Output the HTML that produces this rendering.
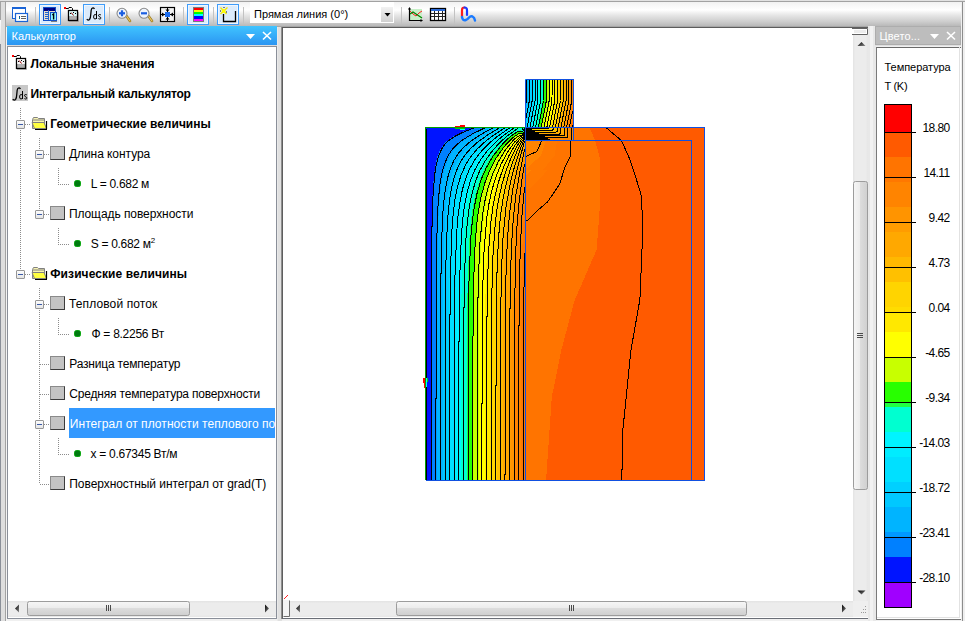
<!DOCTYPE html><html><head><meta charset="utf-8"><style>
html,body{margin:0;padding:0;}
body{width:965px;height:621px;overflow:hidden;position:relative;background:#f0f0f0;font-family:"Liberation Sans",sans-serif;}
.t{position:absolute;white-space:nowrap;line-height:14px;height:14px;}
.dv{position:absolute;}
</style></head><body>
<div style="position:absolute;left:0px;top:0px;width:965px;height:1px;background:#e2e2e2"></div>
<div style="position:absolute;left:0px;top:1px;width:965px;height:1px;background:#a2a2a2"></div>
<div style="position:absolute;left:0px;top:2px;width:1px;height:619px;background:#8a8f98"></div>
<div style="position:absolute;left:0px;top:2px;width:1px;height:18px;background:#a3a3a3"></div>
<div style="position:absolute;left:0px;top:20px;width:1px;height:24px;background:linear-gradient(#fcfcfc,#e0e0e0)"></div>
<div style="position:absolute;left:1px;top:2px;width:4px;height:619px;background:#dedede"></div>
<div style="position:absolute;left:5px;top:2px;width:1px;height:619px;background:#a3a3a3"></div>
<div style="position:absolute;left:6px;top:2px;width:1px;height:619px;background:#f4f4f4"></div>
<div style="position:absolute;left:6px;top:2px;width:959px;height:24px;background:linear-gradient(#f2f2f2 0%,#ffffff 33%,#e6e6e6 55%,#cfcfcf 80%,#b9b9b9 100%)"></div>
<div style="position:absolute;left:6px;top:26px;width:959px;height:1px;background:#a6a6a6"></div>
<div style="position:absolute;left:7px;top:26px;width:270px;height:19px;background:linear-gradient(#40c4ff,#2b95f2)"></div>
<div style="position:absolute;left:7px;top:45px;width:270px;height:1px;background:#dcdcdc"></div>
<div style="position:absolute;left:7px;top:46px;width:270px;height:573px;background:#fff;box-sizing:border-box;border:1px solid #8a8f99"></div>
<div style="position:absolute;left:277px;top:27px;width:5px;height:594px;background:#e0e0e0"></div>
<div style="position:absolute;left:277px;top:27px;width:1px;height:594px;background:#e9e9e9"></div>
<div style="position:absolute;left:281px;top:27px;width:1px;height:592px;background:#8e8e8e"></div>
<div style="position:absolute;left:282px;top:27px;width:587px;height:592px;background:#fff;box-sizing:border-box;border-left:1px solid #5e5e5e;border-top:1px solid #5c5c5c;border-bottom:1px solid #6a6e76"></div>
<div style="position:absolute;left:868px;top:26px;width:8px;height:595px;background:#e8e8e8"></div>
<div style="position:absolute;left:870px;top:26px;width:3px;height:595px;background:#f2f2f2"></div>
<div style="position:absolute;left:875px;top:26px;width:86px;height:19px;background:#bdbdbd;box-sizing:border-box;border:1px solid #adadad"></div>
<div style="position:absolute;left:875px;top:45px;width:87px;height:1px;background:#e0e0e0"></div>
<div style="position:absolute;left:876px;top:47px;width:87px;height:573px;background:#fff;box-sizing:border-box;border:1px solid #7a7a7a;border-top:1px solid #6a6a6a"></div>
<div style="position:absolute;left:877px;top:47px;width:83px;height:571px;box-sizing:border-box;border-right:1px solid #e2e2e2;border-bottom:1px solid #e2e2e2"></div>
<div style="position:absolute;left:961px;top:2px;width:4px;height:619px;background:#efefef"></div>
<div style="position:absolute;left:962px;top:2px;width:1px;height:619px;background:#8c8c8c"></div>
<div style="position:absolute;left:20px;top:108px;width:1px;height:165px;background:repeating-linear-gradient(to bottom,#8c8c8c 0,#8c8c8c 1px,transparent 1px,transparent 2px)"></div>
<div style="position:absolute;left:39px;top:138px;width:1px;height:75px;background:repeating-linear-gradient(to bottom,#8c8c8c 0,#8c8c8c 1px,transparent 1px,transparent 2px)"></div>
<div style="position:absolute;left:39px;top:288px;width:1px;height:195px;background:repeating-linear-gradient(to bottom,#8c8c8c 0,#8c8c8c 1px,transparent 1px,transparent 2px)"></div>
<div style="position:absolute;left:58px;top:168px;width:1px;height:16px;background:repeating-linear-gradient(to bottom,#8c8c8c 0,#8c8c8c 1px,transparent 1px,transparent 2px)"></div>
<div style="position:absolute;left:58px;top:184px;width:11px;height:1px;background:repeating-linear-gradient(to right,#8c8c8c 0,#8c8c8c 1px,transparent 1px,transparent 2px)"></div>
<div style="position:absolute;left:58px;top:228px;width:1px;height:16px;background:repeating-linear-gradient(to bottom,#8c8c8c 0,#8c8c8c 1px,transparent 1px,transparent 2px)"></div>
<div style="position:absolute;left:58px;top:244px;width:11px;height:1px;background:repeating-linear-gradient(to right,#8c8c8c 0,#8c8c8c 1px,transparent 1px,transparent 2px)"></div>
<div style="position:absolute;left:58px;top:318px;width:1px;height:16px;background:repeating-linear-gradient(to bottom,#8c8c8c 0,#8c8c8c 1px,transparent 1px,transparent 2px)"></div>
<div style="position:absolute;left:58px;top:334px;width:11px;height:1px;background:repeating-linear-gradient(to right,#8c8c8c 0,#8c8c8c 1px,transparent 1px,transparent 2px)"></div>
<div style="position:absolute;left:58px;top:438px;width:1px;height:16px;background:repeating-linear-gradient(to bottom,#8c8c8c 0,#8c8c8c 1px,transparent 1px,transparent 2px)"></div>
<div style="position:absolute;left:58px;top:454px;width:11px;height:1px;background:repeating-linear-gradient(to right,#8c8c8c 0,#8c8c8c 1px,transparent 1px,transparent 2px)"></div>
<div style="position:absolute;left:25px;top:124px;width:6px;height:1px;background:repeating-linear-gradient(to right,#8c8c8c 0,#8c8c8c 1px,transparent 1px,transparent 2px)"></div>
<div style="position:absolute;left:25px;top:274px;width:6px;height:1px;background:repeating-linear-gradient(to right,#8c8c8c 0,#8c8c8c 1px,transparent 1px,transparent 2px)"></div>
<div style="position:absolute;left:44px;top:154px;width:6px;height:1px;background:repeating-linear-gradient(to right,#8c8c8c 0,#8c8c8c 1px,transparent 1px,transparent 2px)"></div>
<div style="position:absolute;left:44px;top:214px;width:6px;height:1px;background:repeating-linear-gradient(to right,#8c8c8c 0,#8c8c8c 1px,transparent 1px,transparent 2px)"></div>
<div style="position:absolute;left:44px;top:304px;width:6px;height:1px;background:repeating-linear-gradient(to right,#8c8c8c 0,#8c8c8c 1px,transparent 1px,transparent 2px)"></div>
<div style="position:absolute;left:44px;top:424px;width:6px;height:1px;background:repeating-linear-gradient(to right,#8c8c8c 0,#8c8c8c 1px,transparent 1px,transparent 2px)"></div>
<div style="position:absolute;left:40px;top:364px;width:10px;height:1px;background:repeating-linear-gradient(to right,#8c8c8c 0,#8c8c8c 1px,transparent 1px,transparent 2px)"></div>
<div style="position:absolute;left:40px;top:394px;width:10px;height:1px;background:repeating-linear-gradient(to right,#8c8c8c 0,#8c8c8c 1px,transparent 1px,transparent 2px)"></div>
<div style="position:absolute;left:40px;top:484px;width:10px;height:1px;background:repeating-linear-gradient(to right,#8c8c8c 0,#8c8c8c 1px,transparent 1px,transparent 2px)"></div>
<div style="position:absolute;left:16px;top:120px;width:9px;height:9px;box-sizing:border-box;border:1px solid #969696;border-radius:1px;background:linear-gradient(#fdfdfd,#e4e4e4)"><div style="position:absolute;left:1px;top:3px;width:5px;height:1px;background:#3b5ba8"></div></div>
<div style="position:absolute;left:16px;top:270px;width:9px;height:9px;box-sizing:border-box;border:1px solid #969696;border-radius:1px;background:linear-gradient(#fdfdfd,#e4e4e4)"><div style="position:absolute;left:1px;top:3px;width:5px;height:1px;background:#3b5ba8"></div></div>
<div style="position:absolute;left:35px;top:150px;width:9px;height:9px;box-sizing:border-box;border:1px solid #969696;border-radius:1px;background:linear-gradient(#fdfdfd,#e4e4e4)"><div style="position:absolute;left:1px;top:3px;width:5px;height:1px;background:#3b5ba8"></div></div>
<div style="position:absolute;left:35px;top:210px;width:9px;height:9px;box-sizing:border-box;border:1px solid #969696;border-radius:1px;background:linear-gradient(#fdfdfd,#e4e4e4)"><div style="position:absolute;left:1px;top:3px;width:5px;height:1px;background:#3b5ba8"></div></div>
<div style="position:absolute;left:35px;top:300px;width:9px;height:9px;box-sizing:border-box;border:1px solid #969696;border-radius:1px;background:linear-gradient(#fdfdfd,#e4e4e4)"><div style="position:absolute;left:1px;top:3px;width:5px;height:1px;background:#3b5ba8"></div></div>
<div style="position:absolute;left:35px;top:420px;width:9px;height:9px;box-sizing:border-box;border:1px solid #969696;border-radius:1px;background:linear-gradient(#fdfdfd,#e4e4e4)"><div style="position:absolute;left:1px;top:3px;width:5px;height:1px;background:#3b5ba8"></div></div>
<div style="position:absolute;left:50px;top:146px;width:15px;height:14px;box-sizing:border-box;border:1px solid #8a8a8a;border-right-color:#3c3c3c;border-bottom-color:#3c3c3c;background:#c3c3c3"></div>
<div style="position:absolute;left:50px;top:206px;width:15px;height:14px;box-sizing:border-box;border:1px solid #8a8a8a;border-right-color:#3c3c3c;border-bottom-color:#3c3c3c;background:#c3c3c3"></div>
<div style="position:absolute;left:50px;top:296px;width:15px;height:14px;box-sizing:border-box;border:1px solid #8a8a8a;border-right-color:#3c3c3c;border-bottom-color:#3c3c3c;background:#c3c3c3"></div>
<div style="position:absolute;left:50px;top:356px;width:15px;height:14px;box-sizing:border-box;border:1px solid #8a8a8a;border-right-color:#3c3c3c;border-bottom-color:#3c3c3c;background:#c3c3c3"></div>
<div style="position:absolute;left:50px;top:386px;width:15px;height:14px;box-sizing:border-box;border:1px solid #8a8a8a;border-right-color:#3c3c3c;border-bottom-color:#3c3c3c;background:#c3c3c3"></div>
<div style="position:absolute;left:50px;top:416px;width:15px;height:14px;box-sizing:border-box;border:1px solid #8a8a8a;border-right-color:#3c3c3c;border-bottom-color:#3c3c3c;background:#c3c3c3"></div>
<div style="position:absolute;left:50px;top:476px;width:15px;height:14px;box-sizing:border-box;border:1px solid #8a8a8a;border-right-color:#3c3c3c;border-bottom-color:#3c3c3c;background:#c3c3c3"></div>
<div style="position:absolute;left:74.0px;top:180.0px;width:7px;height:7px;border-radius:50%;background:#007a10;box-shadow:0 0 0 0.5px #12c412 inset"></div>
<div style="position:absolute;left:74.0px;top:240.0px;width:7px;height:7px;border-radius:50%;background:#007a10;box-shadow:0 0 0 0.5px #12c412 inset"></div>
<div style="position:absolute;left:74.0px;top:330.0px;width:7px;height:7px;border-radius:50%;background:#007a10;box-shadow:0 0 0 0.5px #12c412 inset"></div>
<div style="position:absolute;left:74.0px;top:450.0px;width:7px;height:7px;border-radius:50%;background:#007a10;box-shadow:0 0 0 0.5px #12c412 inset"></div>
<div style="position:absolute;left:69px;top:408px;width:206px;height:30px;background:#3399ff"></div>
<div class="t" style="left:30.6px;top:57.44px;font-size:12px;font-weight:bold;color:#000;letter-spacing:-0.116px;">Локальные значения</div>
<div class="t" style="left:30.6px;top:87.44px;font-size:12px;font-weight:bold;color:#000;letter-spacing:-0.243px;">Интегральный калькулятор</div>
<div class="t" style="left:50.2px;top:117.44px;font-size:12px;font-weight:bold;color:#000;letter-spacing:0.013px;">Геометрические величины</div>
<div class="t" style="left:68.89999999999999px;top:147.44px;font-size:12px;font-weight:normal;color:#000;letter-spacing:-0.054px;">Длина контура</div>
<div class="t" style="left:90.69999999999999px;top:177.44px;font-size:12px;font-weight:normal;color:#000;letter-spacing:-0.285px;">L = 0.682 м</div>
<div class="t" style="left:68.89999999999999px;top:207.44px;font-size:12px;font-weight:normal;color:#000;letter-spacing:-0.069px;">Площадь поверхности</div>
<div class="t" style="left:90.69999999999999px;top:237.44px;font-size:12px;font-weight:normal;color:#000;letter-spacing:-0.3px;">S = 0.682 м<sup style='font-size:8px;vertical-align:0;position:relative;top:-5px'>2</sup></div>
<div class="t" style="left:50.300000000000004px;top:267.44px;font-size:12px;font-weight:bold;color:#000;letter-spacing:0.082px;">Физические величины</div>
<div class="t" style="left:69.0px;top:297.44px;font-size:12px;font-weight:normal;color:#000;letter-spacing:0.122px;">Тепловой поток</div>
<div class="t" style="left:91.39999999999999px;top:327.44px;font-size:12px;font-weight:normal;color:#000;letter-spacing:-0.264px;">Ф = 8.2256 Вт</div>
<div class="t" style="left:69.3px;top:357.44px;font-size:12px;font-weight:normal;color:#000;letter-spacing:-0.199px;">Разница температур</div>
<div class="t" style="left:69.3px;top:387.44px;font-size:12px;font-weight:normal;color:#000;letter-spacing:-0.186px;">Средняя температура поверхности</div>
<div class="t" style="left:69.8px;top:417.44px;font-size:12px;font-weight:normal;color:#fff;letter-spacing:0.06px;width:206px;overflow:hidden;">Интеграл от плотности теплового потока</div>
<div class="t" style="left:90.5px;top:447.44px;font-size:12px;font-weight:normal;color:#000;letter-spacing:-0.274px;">x = 0.67345 Вт/м</div>
<div class="t" style="left:69.3px;top:477.44px;font-size:12px;font-weight:normal;color:#000;letter-spacing:-0.062px;">Поверхностный интеграл от grad(T)</div>
<div class="t" style="left:11.5px;top:29.3px;font-size:11px;color:#fff;letter-spacing:0px">Калькулятор</div>
<div class="t" style="left:879.5px;top:29.3px;font-size:11px;color:#fff;letter-spacing:0.1px">Цвето...</div>
<div class="t" style="left:884.5px;top:59.7px;font-size:11px;letter-spacing:-0.04px">Температура</div>
<div class="t" style="left:884.5px;top:78.7px;font-size:11px;letter-spacing:-0.3px">T (K)</div>
<svg style="position:absolute;left:0;top:0" width="965" height="621"><g shape-rendering="crispEdges"><rect x="884" y="104" width="28" height="28" fill="#ff0000"/><rect x="884" y="132" width="28" height="25" fill="#ff5a00"/><rect x="884" y="157" width="28" height="20" fill="#ff7400"/><rect x="884" y="177" width="28" height="5" fill="#ff7800"/><rect x="884" y="182" width="28" height="25" fill="#ff8400"/><rect x="884" y="207" width="28" height="15" fill="#ff9400"/><rect x="884" y="222" width="28" height="10" fill="#ff9c00"/><rect x="884" y="232" width="28" height="25" fill="#ffa800"/><rect x="884" y="257" width="28" height="10" fill="#ffb800"/><rect x="884" y="267" width="28" height="15" fill="#ffc000"/><rect x="884" y="282" width="28" height="25" fill="#ffd400"/><rect x="884" y="307" width="28" height="5" fill="#ffdc00"/><rect x="884" y="312" width="28" height="20" fill="#ffe800"/><rect x="884" y="332" width="28" height="25" fill="#ffff00"/><rect x="884" y="357" width="28" height="25" fill="#c8ff00"/><rect x="884" y="382" width="28" height="20" fill="#28ff00"/><rect x="884" y="402" width="28" height="5" fill="#20ff40"/><rect x="884" y="407" width="28" height="25" fill="#00ffd0"/><rect x="884" y="432" width="28" height="15" fill="#00f4ff"/><rect x="884" y="447" width="28" height="10" fill="#00ecff"/><rect x="884" y="457" width="28" height="25" fill="#00e0ff"/><rect x="884" y="482" width="28" height="10" fill="#00d0ff"/><rect x="884" y="492" width="28" height="15" fill="#00c8ff"/><rect x="884" y="507" width="28" height="25" fill="#00b4ff"/><rect x="884" y="532" width="28" height="5" fill="#0098ff"/><rect x="884" y="537" width="28" height="20" fill="#0080ff"/><rect x="884" y="557" width="28" height="25" fill="#0014ff"/><rect x="884" y="582" width="28" height="26" fill="#a000ff"/><rect x="884.5" y="104.5" width="27" height="503" fill="none" stroke="#000" stroke-width="1"/><rect x="884" y="132" width="32" height="1" fill="#000"/><rect x="884" y="177" width="32" height="1" fill="#000"/><rect x="884" y="222" width="32" height="1" fill="#000"/><rect x="884" y="267" width="32" height="1" fill="#000"/><rect x="884" y="312" width="32" height="1" fill="#000"/><rect x="884" y="357" width="32" height="1" fill="#000"/><rect x="884" y="402" width="32" height="1" fill="#000"/><rect x="884" y="447" width="32" height="1" fill="#000"/><rect x="884" y="492" width="32" height="1" fill="#000"/><rect x="884" y="537" width="32" height="1" fill="#000"/><rect x="884" y="582" width="32" height="1" fill="#000"/></g></svg>
<div class="t" style="left:860px;width:89.5px;text-align:right;top:121.34px;font-size:12px;letter-spacing:-0.62px">18.80</div>
<div class="t" style="left:860px;width:89.5px;text-align:right;top:166.34px;font-size:12px;letter-spacing:-0.62px">14.11</div>
<div class="t" style="left:860px;width:89.5px;text-align:right;top:211.34px;font-size:12px;letter-spacing:-0.62px">9.42</div>
<div class="t" style="left:860px;width:89.5px;text-align:right;top:256.34px;font-size:12px;letter-spacing:-0.62px">4.73</div>
<div class="t" style="left:860px;width:89.5px;text-align:right;top:301.34px;font-size:12px;letter-spacing:-0.62px">0.04</div>
<div class="t" style="left:860px;width:89.5px;text-align:right;top:346.34px;font-size:12px;letter-spacing:-0.62px">-4.65</div>
<div class="t" style="left:860px;width:89.5px;text-align:right;top:391.34px;font-size:12px;letter-spacing:-0.62px">-9.34</div>
<div class="t" style="left:860px;width:89.5px;text-align:right;top:436.34px;font-size:12px;letter-spacing:-0.62px">-14.03</div>
<div class="t" style="left:860px;width:89.5px;text-align:right;top:481.34px;font-size:12px;letter-spacing:-0.62px">-18.72</div>
<div class="t" style="left:860px;width:89.5px;text-align:right;top:526.34px;font-size:12px;letter-spacing:-0.62px">-23.41</div>
<div class="t" style="left:860px;width:89.5px;text-align:right;top:571.34px;font-size:12px;letter-spacing:-0.62px">-28.10</div>
<svg style="position:absolute;left:0;top:0" width="965" height="621"><defs><linearGradient id="thv" x1="0" y1="0" x2="1" y2="0"><stop offset="0" stop-color="#f6f6f6"/><stop offset="0.45" stop-color="#ececec"/><stop offset="0.5" stop-color="#dcdcdc"/><stop offset="1" stop-color="#cfcfcf"/></linearGradient><linearGradient id="thh" x1="0" y1="0" x2="0" y2="1"><stop offset="0" stop-color="#f6f6f6"/><stop offset="0.45" stop-color="#ececec"/><stop offset="0.5" stop-color="#dcdcdc"/><stop offset="1" stop-color="#cfcfcf"/></linearGradient><linearGradient id="trh" x1="0" y1="0" x2="0" y2="1"><stop offset="0" stop-color="#e3e3e3"/><stop offset="0.15" stop-color="#ececec"/><stop offset="0.85" stop-color="#ececec"/><stop offset="1" stop-color="#e6e6e6"/></linearGradient><linearGradient id="trv" x1="0" y1="0" x2="1" y2="0"><stop offset="0" stop-color="#e3e3e3"/><stop offset="0.15" stop-color="#ececec"/><stop offset="0.85" stop-color="#ececec"/><stop offset="1" stop-color="#e6e6e6"/></linearGradient><linearGradient id="arr" x1="0" y1="0" x2="1" y2="1"><stop offset="0" stop-color="#000"/><stop offset="1" stop-color="#8a8a8a"/></linearGradient><linearGradient id="cbb" x1="0" y1="0" x2="0" y2="1"><stop offset="0" stop-color="#f2f2f2"/><stop offset="1" stop-color="#d0d0d0"/></linearGradient></defs><rect x="8" y="601" width="268" height="16" fill="url(#trh)"/><rect x="27.5" y="601.5" width="162" height="14" rx="2" fill="url(#thh)" stroke="#9c9c9c"/><polygon points="15,608.5 19,604.5 19,612.5" fill="url(#arr)"/><polygon points="269,608.5 265,604.5 265,612.5" fill="url(#arr)"/><rect x="106" y="605" width="1" height="6" fill="#4a4a4a"/><rect x="108" y="605" width="1" height="6" fill="#4a4a4a"/><rect x="110" y="605" width="1" height="6" fill="#4a4a4a"/><rect x="283" y="601" width="570" height="16" fill="url(#trh)"/><rect x="396.5" y="601.5" width="350" height="14" rx="2" fill="url(#thh)" stroke="#9c9c9c"/><rect x="569" y="605" width="1" height="6" fill="#4a4a4a"/><rect x="571" y="605" width="1" height="6" fill="#4a4a4a"/><rect x="573" y="605" width="1" height="6" fill="#4a4a4a"/><polygon points="296,608.5 300,604.5 300,612.5" fill="url(#arr)"/><polygon points="846,608.5 842,604.5 842,612.5" fill="url(#arr)"/><rect x="283" y="600" width="7" height="17" fill="#f4f4f4"/><path d="M283.5 616.5 H289.5 V600.5" fill="none" stroke="#6e6e6e"/><path d="M284 599 L288 595" stroke="#ff2020" stroke-width="1"/><rect x="853" y="35" width="15" height="566" fill="url(#trv)"/><rect x="853.5" y="181.5" width="14" height="308" rx="2" fill="url(#thv)" stroke="#9c9c9c"/><rect x="857" y="333" width="6" height="1" fill="#4a4a4a"/><rect x="857" y="335" width="6" height="1" fill="#4a4a4a"/><rect x="857" y="337" width="6" height="1" fill="#4a4a4a"/><polygon points="861.5,42 865.5,46 857.5,46" fill="url(#arr)"/><polygon points="861.5,594.5 865.5,590.5 857.5,590.5" fill="url(#arr)"/><rect x="853" y="28" width="15" height="7" fill="#fff"/><path d="M852 28.5 H867.5 V34.5 H852" fill="none" stroke="#626262"/><rect x="854" y="30" width="12" height="3" fill="#ececec"/><rect x="853" y="601" width="15" height="16" fill="#efefef"/><rect x="865" y="606" width="1" height="1" fill="#9a9a9a"/><rect x="863" y="609" width="1" height="1" fill="#9a9a9a"/><rect x="865" y="609" width="1" height="1" fill="#9a9a9a"/><rect x="861" y="612" width="1" height="1" fill="#9a9a9a"/><rect x="863" y="612" width="1" height="1" fill="#9a9a9a"/><rect x="865" y="612" width="1" height="1" fill="#9a9a9a"/><polygon points="246,34 255,34 250.5,39" fill="#fff"/><polygon points="930,34 939,34 934.5,39" fill="#fff"/><path d="M263 32 L271 39.5 M271 32 L263 39.5" stroke="#fff" stroke-width="1.6"/><path d="M947 32 L955 39.5 M955 32 L947 39.5" stroke="#fff" stroke-width="1.6"/><rect x="250" y="2" width="144" height="21" fill="#fff"/><rect x="381" y="7" width="12" height="15" fill="url(#cbb)"/><polygon points="384.5,13 390.5,13 387.5,16.5" fill="#000"/></svg>
<div class="t" style="left:254px;top:6.699999999999999px;font-size:11px;letter-spacing:0px;color:#000">Прямая линия (0°)</div>
<svg style="position:absolute;left:0;top:0" width="965" height="621"><g>
<rect x="12" y="55" width="2" height="2" fill="#ff0000"/>
<path d="M14 56.5 H16.5 L17 55.5 H19.5 L20.5 56.5 V58" fill="none" stroke="#000" stroke-width="1"/>
<rect x="17" y="60" width="10" height="10" fill="#9a9a9a" opacity="0.6"/>
<rect x="16.5" y="58.5" width="9" height="10" fill="#b0b0b0" stroke="#000" stroke-width="1.3"/>
<rect x="17.2" y="59.2" width="7.6" height="4.8" fill="#f4f4f4"/>
<path d="M19.2 60.5 L21.5 63.5" stroke="#a00000" stroke-width="1"/>
<rect x="18" y="61" width="1" height="1" fill="#000"/><rect x="21" y="60" width="1" height="1" fill="#000"/><rect x="23" y="61" width="1" height="1" fill="#000"/>
</g><rect x="12" y="85" width="16" height="16" fill="#c8c8c8"/>
<g fill="none" stroke="#000">
<path d="M12.8 99.2 Q14 100.8 15.6 99.4 Q16.6 98 16.8 94 L17.2 90 Q17.6 87.6 19.2 87.8 Q20 88 20.4 89" stroke-width="1.3"/>
<path d="M22.5 91 V99" stroke-width="1"/>
<path d="M22.5 95.5 Q22 94.5 21 94.5 Q19.6 94.5 19.6 97 Q19.6 99 21 99 Q22 99 22.5 98" stroke-width="1"/>
<path d="M27 95.2 Q26.5 94.5 25.5 94.5 Q24.3 94.6 24.6 95.8 Q25 96.8 26 97 Q27.2 97.4 26.8 98.5 Q26.4 99.2 25.2 99 Q24.5 98.8 24.3 98.4" stroke-width="1"/>
</g><g transform="translate(31,116)">
<path d="M1.5 12.5 V3.5 L2.5 1.5 H6.5 L7.5 2.5 H13.5 V12.5 Z" fill="#f8f4b0" stroke="#808080" stroke-width="1"/>
<path d="M2 4 H13" stroke="#808080"/>
<path d="M1 6.5 H13 L15.5 12.5 H3.5 Z" fill="#ffff40" stroke="#808080" stroke-width="1"/>
<path d="M4 13.5 H16 M15.5 5 V13" stroke="#000" stroke-width="1.2"/>
</g><g transform="translate(31,266)">
<path d="M1.5 12.5 V3.5 L2.5 1.5 H6.5 L7.5 2.5 H13.5 V12.5 Z" fill="#f8f4b0" stroke="#808080" stroke-width="1"/>
<path d="M2 4 H13" stroke="#808080"/>
<path d="M1 6.5 H13 L15.5 12.5 H3.5 Z" fill="#ffff40" stroke="#808080" stroke-width="1"/>
<path d="M4 13.5 H16 M15.5 5 V13" stroke="#000" stroke-width="1.2"/>
</g></svg>
<svg style="position:absolute;left:0;top:0" width="965" height="621" viewBox="0 0 965 621"><line x1="35.5" y1="7" x2="35.5" y2="24" stroke="#c2c2c2" stroke-width="1"/><line x1="109.5" y1="7" x2="109.5" y2="24" stroke="#c2c2c2" stroke-width="1"/><line x1="183.5" y1="7" x2="183.5" y2="24" stroke="#c2c2c2" stroke-width="1"/><line x1="213.5" y1="7" x2="213.5" y2="24" stroke="#c2c2c2" stroke-width="1"/><line x1="243.5" y1="7" x2="243.5" y2="24" stroke="#c2c2c2" stroke-width="1"/><line x1="401.5" y1="7" x2="401.5" y2="24" stroke="#c2c2c2" stroke-width="1"/><line x1="454.5" y1="7" x2="454.5" y2="24" stroke="#c2c2c2" stroke-width="1"/><rect x="39.5" y="4.5" width="21" height="20" fill="#dcebfb" stroke="#3f9cf9" stroke-width="1"/><rect x="40.5" y="5.5" width="19" height="18" fill="none" stroke="#eef6ff" stroke-width="1"/><rect x="83.5" y="4.5" width="21" height="20" fill="#dcebfb" stroke="#3f9cf9" stroke-width="1"/><rect x="84.5" y="5.5" width="19" height="18" fill="none" stroke="#eef6ff" stroke-width="1"/><rect x="187.5" y="4.5" width="21" height="20" fill="#dcebfb" stroke="#3f9cf9" stroke-width="1"/><rect x="188.5" y="5.5" width="19" height="18" fill="none" stroke="#eef6ff" stroke-width="1"/><rect x="217.5" y="4.5" width="21" height="20" fill="#dcebfb" stroke="#3f9cf9" stroke-width="1"/><rect x="218.5" y="5.5" width="19" height="18" fill="none" stroke="#eef6ff" stroke-width="1"/><g>
<rect x="12.5" y="7.5" width="13" height="11" fill="#fff" stroke="#1a64d6" stroke-width="1"/>
<rect x="12" y="7" width="14" height="2" fill="#1a64d6"/>
<rect x="15.5" y="13.5" width="12" height="8" fill="#fff" stroke="#1a64d6" stroke-width="1.2"/>
<rect x="19" y="16" width="1" height="3" fill="#0a7a80"/><rect x="19" y="16" width="1" height="1" fill="#1030c0"/>
<rect x="21" y="16" width="5" height="1" fill="#606060"/><rect x="21" y="18" width="5" height="1" fill="#606060"/>
</g><g>
<rect x="43.5" y="7.5" width="12" height="13" fill="#e8dccc" stroke="#1050c8" stroke-width="1"/>
<rect x="44" y="8" width="11" height="3" fill="#000080"/>
<rect x="45" y="12" width="3" height="1" fill="#1f62d0"/><rect x="45" y="14" width="3" height="1" fill="#1f62d0"/>
<rect x="45" y="16" width="3" height="1" fill="#1f62d0"/><rect x="45" y="18" width="3" height="1" fill="#1f62d0"/>
<rect x="48" y="10" width="1" height="10" fill="#1f62d0"/>
<rect x="51" y="13" width="6" height="9" fill="#808080"/>
<rect x="50.5" y="12.5" width="6" height="8" fill="#8ef4ff" stroke="#1050c8" stroke-width="1"/>
<path d="M52.3 15 L53.6 14 L53.6 19.5" fill="none" stroke="#000" stroke-width="1.4"/>
</g><g>
<rect x="64" y="7" width="2" height="2" fill="#ff0000"/>
<path d="M66 8.5 H68.5 L69 7.5 H71.5 L72.5 8.5 V10" fill="none" stroke="#000" stroke-width="1"/>
<rect x="69" y="12" width="10" height="10" fill="#9a9a9a" opacity="0.6"/>
<rect x="68.5" y="10.5" width="9" height="10" fill="#b0b0b0" stroke="#000" stroke-width="1.3"/>
<rect x="69.2" y="11.2" width="7.6" height="4.8" fill="#d6fafa"/>
<path d="M71.2 12.5 L73.5 15.5" stroke="#a00000" stroke-width="1"/>
<rect x="70" y="13" width="1" height="1" fill="#000"/><rect x="73" y="12" width="1" height="1" fill="#000"/><rect x="75" y="13" width="1" height="1" fill="#000"/>
</g><g fill="none" stroke="#000">
<path d="M86.8 19.2 Q88 20.8 89.6 19.4 Q90.6 18 90.8 14 L91.2 10 Q91.6 7.6 93.2 7.8 Q94 8 94.4 9" stroke-width="1.3"/>
<path d="M96.5 11 V19" stroke-width="1"/>
<path d="M96.5 15.5 Q96 14.5 95 14.5 Q93.6 14.5 93.6 17 Q93.6 19 95 19 Q96 19 96.5 18" stroke-width="1"/>
<path d="M101 15.2 Q100.5 14.5 99.5 14.5 Q98.3 14.6 98.6 15.8 Q99 16.8 100 17 Q101.2 17.4 100.8 18.5 Q100.4 19.2 99.2 19 Q98.5 18.8 98.3 18.4" stroke-width="1"/>
</g><g>
<path d="M125 14 L130 21" stroke="#9a7a20" stroke-width="2.6" stroke-linecap="round"/>
<path d="M125 14 L130 21" stroke="#f0c860" stroke-width="1.2" stroke-linecap="round"/>
<circle cx="122" cy="13.3" r="5" fill="#eef4fc" stroke="#8a8a8a" stroke-width="1.1"/>
<rect x="119" y="12.2" width="6" height="2.2" fill="#1a5ee0"/><rect x="120.9" y="10.3" width="2.2" height="6" fill="#1a5ee0"/></g><g>
<path d="M147 14 L152 21" stroke="#9a7a20" stroke-width="2.6" stroke-linecap="round"/>
<path d="M147 14 L152 21" stroke="#f0c860" stroke-width="1.2" stroke-linecap="round"/>
<circle cx="144" cy="13.3" r="5" fill="#eef4fc" stroke="#8a8a8a" stroke-width="1.1"/>
<rect x="141" y="12.2" width="6" height="2.2" fill="#1a5ee0"/></g><g>
<rect x="160.5" y="7.5" width="14" height="14" fill="#f2f2f2" stroke="#000" stroke-width="1.2"/>
<line x1="167.5" y1="8" x2="167.5" y2="21" stroke="#000" stroke-width="1"/>
<line x1="161" y1="14.5" x2="174" y2="14.5" stroke="#000" stroke-width="1"/>
<rect x="165" y="12" width="5" height="5" fill="#1a6cf0"/>
<path d="M165.5 9.5 L169.5 9.5 L167.5 12 Z M165.5 19.5 L169.5 19.5 L167.5 17 Z M162 12.5 L162 16.5 L165 14.5 Z M173 12.5 L173 16.5 L170 14.5 Z" fill="#000"/>
</g><rect x="193.5" y="7.5" width="10" height="14" fill="#888" stroke="#7a7a7a" stroke-width="1"/><rect x="194" y="8" width="9" height="2" fill="#ff0000"/><rect x="194" y="10" width="9" height="2" fill="#ffff00"/><rect x="194" y="12" width="9" height="2" fill="#00ff00"/><rect x="194" y="14" width="9" height="2" fill="#00ffff"/><rect x="194" y="16" width="9" height="3" fill="#0000ff"/><rect x="194" y="19" width="9" height="2" fill="#ff00ff"/><g>
<path d="M223.5 14 V21.5 H235.5 V11" fill="none" stroke="#000" stroke-width="1.3"/>
<path d="M220.5 7.5 L226.5 14 M227.5 7.5 L220.5 14" stroke="#f4e800" stroke-width="1.3"/>
<circle cx="223.6" cy="11" r="2" fill="#ffff00"/>
<rect x="223" y="7" width="2" height="1" fill="#808080"/><rect x="220" y="10" width="1" height="2" fill="#808080"/><rect x="226" y="11" width="1" height="2" fill="#808080"/>
</g><g>
<rect x="409" y="9" width="13" height="11" fill="#c8f0c8"/>
<path d="M409.5 8 V20.5 H422" fill="none" stroke="#000" stroke-width="1.2"/>
<path d="M408 9.5 L409.5 7 L411 9.5 Z M420.5 19 L423 20.5 L420.5 22 Z" fill="#000"/>
<path d="M410 11 L413 14 L416 16 L419 13 L422 11" fill="none" stroke="#ff2020" stroke-width="1"/>
<path d="M410 14 L413 12 L416 14 L419 16 L422 18" fill="none" stroke="#008000" stroke-width="1.2"/>
</g><rect x="430.5" y="8.5" width="15" height="12" fill="#fff" stroke="#000" stroke-width="1.3"/><rect x="431" y="9" width="14" height="2" fill="#2a6ad8"/><line x1="431" y1="13.5" x2="445" y2="13.5" stroke="#222" stroke-width="1"/><line x1="431" y1="16.5" x2="445" y2="16.5" stroke="#222" stroke-width="1"/><line x1="434.5" y1="11" x2="434.5" y2="20" stroke="#222" stroke-width="1"/><line x1="438.5" y1="11" x2="438.5" y2="20" stroke="#222" stroke-width="1"/><line x1="442.5" y1="11" x2="442.5" y2="20" stroke="#222" stroke-width="1"/><g fill="none" stroke-linecap="round">
<path d="M462 17 V10 Q462 7.5 464.5 7.5" stroke="#ff1a1a" stroke-width="2.2"/>
<path d="M464.5 7.5 Q467 7.5 467 10 V15" stroke="#1a3aff" stroke-width="2.2"/>
<path d="M462 17 Q462.5 21 466 20 Q468 19 469 17.5 Q470.5 15.8 472.5 16.5 Q474.5 17.5 475 20.5" stroke="#1a7aff" stroke-width="2.4"/>
</g></svg>
<svg style="position:absolute;left:0;top:0" width="965" height="621" viewBox="0 0 965 621"><defs><clipPath id="cw"><rect x="425" y="127" width="100" height="353"/></clipPath><clipPath id="cr"><rect x="525" y="127" width="180" height="353"/></clipPath><clipPath id="cc"><rect x="525" y="79" width="48" height="48"/></clipPath><clipPath id="cb"><rect x="525" y="127" width="48" height="13"/></clipPath></defs><g shape-rendering="crispEdges"><g clip-path="url(#cw)"><rect x="425" y="127" width="100" height="353" fill="#0014ff"/><path d="M473.7 127 525 127 525 480 430.8 480 431.2 243.5 432.1 200.5 434.1 173.5 435.7 163.5 437.7 155.5 440.5 149 444.3 143.5 448.6 139.5 454.5 135.7 462.5 131.9 473.7 127.5Z" fill="#0080ff"/><path d="M525 127 525 480 435.6 480 435.7 308.5 436.4 239.5 437.1 215.5 438.3 196.5 440.1 181.5 442.4 169.5 444.9 161.5 447.7 155.5 450.9 150.5 455.2 145.5 459.8 141.5 465.6 137.5 474.6 132.5 485.1 127.5 485.1 127Z" fill="#0098ff"/><path d="M525 127 525 480 436.8 480 436.9 310.5 437.6 241.5 438.4 217.5 439.7 198.5 441.4 183.5 443.8 171.5 448 159.5 450.6 154.5 454.2 149.5 457.9 145.5 462.7 141.5 474.5 134 487.4 127.5 487.4 127Z" fill="#00b4ff"/><path d="M525 127 525 480 442.8 480 442.9 321.5 443.7 253.5 444.6 228.5 445.8 209.5 447.5 194.5 449.9 181.5 453.9 168.5 456.7 162.5 459.6 157.5 466.8 148.5 477.4 139.5 486.4 133.5 496.9 127.5 496.9 127Z" fill="#00c8ff"/><path d="M525 127 525 480 446.4 480 446.5 326.5 447.3 259.5 448.2 234.5 449.4 215.5 451.2 199.5 453.5 186.5 457.6 172.5 462.8 161.5 470 151.5 479.3 142.5 488.7 135.5 501.5 127.5 501.5 127Z" fill="#00d0ff"/><path d="M525 127 525 480 448.8 480 448.9 329.5 449.7 262.5 450.5 238.5 451.8 218.5 453.6 202.5 455.8 189.5 459.7 175.5 465.1 163.5 471.9 153.5 480.6 144.5 489.2 137.5 504.4 127.5 504.4 127Z" fill="#00e0ff"/><path d="M525 127 525 128.2 524.3 128.5 524.5 129 525 129 525 480 454.8 480 455 334.5 455.7 269.5 456.5 245.5 457.8 225.5 459.4 209.5 461.7 195.5 465.3 181.5 470 169.5 475.7 159.5 483.6 149.5 494.1 139.5 501.8 133.5 510.7 127.5 510.7 127Z" fill="#00ecff"/><path d="M525 127 524 128.5 524.2 129.5 525 129.8 525 480 457.2 480 457.4 337.5 458.1 272.5 460.1 228.5 461.7 212.5 463.9 198.5 467.3 184.5 471.6 172.5 477.4 161.5 484.8 151.5 490.3 145.5 496.7 139.5 504.3 133.5 513 127.5 513 127Z" fill="#00f4ff"/><path d="M524 127 523.5 129.5 524.1 130.5 525 130.8 525 480 460.8 480 461 341.5 461.7 276.5 463.6 232.5 465.1 216.5 467.2 202.5 470.3 188.5 474.6 175.5 480 164.5 486.6 154.5 492.4 147.5 499.3 140.5 506.5 134.5 516.3 127.5 516.3 127Z" fill="#00ffd0"/><path d="M520.5 130.4 525 132.1 525 480 466.8 480 467 346.5 467.6 283.5 469.3 240.5 470.7 223.5 472.5 209.5 475.1 195.5 478.8 182.5 483.1 171.5 488.9 160.5 496.7 149.5 505.9 139.5 514.5 132.7 518.5 130.7Z" fill="#20ff40"/><path d="M520.5 131.2 525 132.4 525 480 468 480 468.2 347.5 468.8 284.5 470.4 241.5 471.8 224.5 473.6 210.5 476.2 196.5 479.7 183.5 483.9 172.5 489.6 161.5 497.1 150.5 505.9 140.5 514.5 133.4 517.5 131.8Z" fill="#28ff00"/><path d="M525 133.4 525 480 472.8 480 473 348.5 473.6 285.5 475.3 242.5 476.7 225.5 478.4 211.5 481.2 196.5 485.1 182.5 489.7 170.5 496 158.5 504.4 146.5 512.5 137.9 518.5 133.9 521.5 133.3Z" fill="#c8ff00"/><path d="M525 134.7 525 480 478.8 480 479 352.5 479.6 289.5 481.1 246.5 484 215.5 486.5 200.5 489.9 186.5 493.9 174.5 499.2 162.5 506.2 150.5 513.1 141.5 518.8 136.5 521.5 135.3Z" fill="#ffff00"/><path d="M525 135.9 525 480 484.8 480 484.9 356.5 485.5 294.5 486.9 251.5 489.4 220.5 491.5 205.5 494.4 191.5 498 178.5 502.5 166.5 508.8 153.5 515.1 143.5 519.7 138.5 522.5 136.7Z" fill="#ffe800"/><path d="M525 136.9 525 480 489.6 480 490.2 298.5 491.5 255.5 493.7 224.5 495.5 209.5 498 195.5 501.1 182.5 504.9 170.5 510.2 157.5 515.9 146.5 520.9 139.5 523.3 137.5Z" fill="#ffdc00"/><path d="M525 137.2 525 480 490.8 480 491.4 299.5 492.6 256.5 494.7 225.5 496.5 210.5 498.9 196.5 501.9 183.5 505.6 171.5 510.6 158.5 516.5 146.5 521.4 139.5 523.8 137.5Z" fill="#ffd400"/><path d="M525 138.5 525 480 496.8 480 497.3 303.5 498.3 261.5 500.1 230.5 503.6 201.5 505.8 189.5 508.7 177.5 513 163.5 517.9 150.5 522.1 141.5 523.4 139.5Z" fill="#ffc000"/><path d="M525 139.3 525 480 500.4 480 500.9 307.5 501.8 265.5 503.3 234.5 506.1 206.5 510.7 181.5 514 168.5 518.1 155.5 523.2 141.5 524.3 139.5Z" fill="#ffb800"/><path d="M525 140.1 525 480 502.8 480 503.2 309.5 504.1 267.5 505.5 236.5 508 209.5 511.8 185.5 518 160.5 524.5 140.1Z" fill="#ffa800"/><path d="M525 148.1 525 480 508.8 480 509.2 316.5 509.7 275.5 510.8 244.5 512.7 217.5 515.3 194.5 519.4 171.5 524.5 148.1Z" fill="#ff9c00"/><path d="M525 154.4 525 480 511.2 480 511.5 319.5 513 248.5 514.5 221.5 517 197.5 520.8 173.5 524.5 154.4Z" fill="#ff9400"/><path d="M525 166.8 525 480 514.8 480 515.1 326.5 516.1 256.5 517.3 229.5 519.2 205.5 522.3 180.5 524.5 166.8Z" fill="#ff8400"/><path d="M525 205.4 525 480 520.8 480 521.4 280.5 522.9 231.5 524.5 205.4Z" fill="#ff7800"/><path d="M525 221.2 525 480 522 480 522.5 290.5 523.5 242.5 524.5 221.2Z" fill="#ff7400"/><path d="M431.2 480 431.6 244.5 432.6 201.5 434.7 174.5 436.3 164.5 438.4 156.5 441.4 149.5 444.8 144.5 448.8 140.5 454.6 136.5 462.6 132.5 475 127.5 475 127M435.8 480 436.4 255.5 437.6 211.5 438.7 196.5 440.1 183.5 442.1 172.5 444.7 163.5 448.2 155.5 452.2 149.5 456.8 144.5 463.2 139.5 472.5 133.9 485.6 127.5 485.6 127M440.4 480 440.6 328.5 441.1 262.5 442.4 219.5 443.6 203.5 445.2 190.5 447.4 178.5 450.4 168.5 453.9 160.5 458.5 153.2 463.5 147.5 470.4 141.5 480.8 134.5 493.5 127.5 493.5 127M445.1 480 445.2 334.5 445.7 268.5 447.3 224.5 448.5 208.5 450.2 195.5 452.5 183.4 455.7 172.5 459.6 163.5 464.6 155.5 470.6 148.5 477.2 142.5 486.8 135.5 499.9 127.5 499.9 127M449.7 480 449.8 337.5 450.4 272.5 452 229.5 453.2 213.5 455 199.5 457.6 186.5 460.9 175.5 465.3 165.5 470.1 157.5 476.7 149.5 484.1 142.5 493.1 135.5 505.3 127.5 505.3 127M525 128.4 524.4 128.5 525 128.7M454.3 480 454.4 340.5 455 275.5 456.7 232.5 458 216.5 459.9 202.5 462.4 189.5 465.7 178.5 469.8 168.5 475 159.5 481.2 151.5 488.9 143.5 497.2 136.5 510.2 127.5 510.2 127M524.3 127 523.9 129.5 525 130.3M458.9 480 459 342.5 459.7 278.5 461.4 235.5 462.7 219.5 464.5 205.5 467.1 192.5 470.5 180.5 475 169.5 480.1 160.5 486.7 151.5 494.2 143.5 502.1 136.5 514.6 127.5 514.6 127M523.6 127 523.5 127.7 522.6 128.5 522.6 129.5 523.2 130.5 525 131.4M463.5 480 463.6 345.5 464.3 281.5 466 238.5 467.4 221.5 469.2 207.5 471.8 194.5 475.1 182.5 479.4 171.5 484.8 161.5 491 152.5 498.9 143.5 506.4 136.5 517.8 128.5 518.9 127M468.1 480 468.3 345.5 469 281.5 470.7 238.5 472.3 221.5 474.2 207.5 477.2 192.5 481.2 179.5 486.4 167.5 492.8 156.5 502.2 144.5 507 139.5 512.5 134.9 516.5 132.3 519.5 131.3 525 132.4M472.7 480 472.9 348.5 473.5 285.5 475.2 242.5 476.6 225.5 478.3 211.5 481.1 196.5 485 182.5 490.1 169.5 495.9 158.5 504.3 146.5 512.9 137.5 518.5 133.9 521.5 133.2 525 133.4M477.3 480 477.5 351.5 478.1 288.5 479.7 245.5 482.6 214.5 485.2 199.5 488.7 185.5 492.9 173.5 498.4 161.5 505.7 149.5 513 140.5 516.3 137.5 519.5 135.5 525 134.3M481.9 480 482.1 354.5 482.6 292.5 484.1 249.5 486.7 218.5 489 203.5 492.1 189.5 496.1 176.5 500.9 164.5 507.3 152.5 514.2 142.5 519.3 137.5 522.5 135.8 525 135.3M486.5 480 486.7 356.5 487.2 295.5 488.5 252.5 491 221.5 493 206.5 495.8 192.5 499.3 179.5 503.5 167.5 509 155.5 515.4 144.5 520.5 138.5 522.5 137.2 525 136.3M491.1 480 491.7 299.5 492.9 256.5 495.1 225.5 496.8 210.5 499.2 196.5 502.2 183.5 505.8 171.5 510.8 158.5 516.7 146.5 521.5 139.5 523.5 137.8 525 137.2M495.7 480 496.3 302.5 497.3 260.5 499.2 229.5 500.7 214.5 502.8 200.5 505.1 188.5 508.1 176.5 512.5 162.5 517.7 149.5 522.3 140.5 524.1 138.5 525 138.2M500.4 480 500.8 307.5 501.7 265.5 503.2 234.5 506.1 206.5 510.6 181.5 514 168.5 518.4 154.5 523.2 141.5 524.3 139.5 525 139.3M505 480 505.4 311.5 506.1 270.5 507.4 239.5 509.6 212.5 513 188.5 517.8 166.5 524.4 141.5 525 141.3M509.6 480 509.9 316.5 510.5 276.5 511.5 245.5 513.3 218.5 516 194.5 520 171.5 524.5 149.9 525 149.9M514.2 480 514.4 324.5 515.6 254.5 516.9 227.5 518.9 203.5 522.1 178.5 524.5 164.2 525 164.2M518.8 480 518.9 336.5 519.6 269.5 521.6 219.5 524.5 187.7 525 187.7M523.4 480 523.7 308.5 524.5 253.1 525 253.1" fill="none" stroke="#000" stroke-width="1" shape-rendering="crispEdges"/></g><g clip-path="url(#cr)"><rect x="525" y="127" width="180" height="353" fill="#ff8400"/><path d="M546.3 127 705 127 705 480 525 480 525 175.6 525.5 175.6 531.5 170.5 525 169.4 525.5 169.4 541 155.5 546.1 140.5Z" fill="#ff7800"/><path d="M557.1 127 705 127 705 480 525 480 525 191.7 526.5 191 534.5 184.5 542.5 176 546.7 170.5 543.5 169.5 554.6 155.5 557.2 140.5Z" fill="#ff7400"/><path d="M589.3 127 705 127 705 480 546.1 480 551.5 401.4 552.3 394.5 561.5 349.3 574.5 300.7 596.7 249.5 600.3 200.5 600.4 160.5 595.2 140.5Z" fill="#ff5a00"/><path d="M525 157 536.5 151.6 537.5 150.5 541.7 140.5 541.8 127M525 221 527.5 220.5 538.5 209.6 547.5 202 559.5 184.4 564.9 167.5 570.2 156.5 569.9 127M621.9 480 622.4 434.5 630.9 350.5 639.9 299.5 643 225.5 640.9 193.5 629.9 159.5 621.4 140.5 605.9 127.5 605.9 127" fill="none" stroke="#000" stroke-width="1" shape-rendering="crispEdges"/></g><g clip-path="url(#cc)"><rect x="525" y="79" width="48" height="48" fill="#00b4ff"/><path d="M528.1 79 573 79 573 127 525 127 525 113.4 525.5 113.4 528.1 99.5Z" fill="#00c8ff"/><path d="M530.3 79 573 79 573 127 525 127 525 124.7 525.5 124.7 530.2 100.5Z" fill="#00d0ff"/><path d="M531.8 79 573 79 573 127 526.6 127 531.7 100.5Z" fill="#00e0ff"/><path d="M535.5 79 573 79 573 127 530.3 127 535.4 100.5Z" fill="#00ecff"/><path d="M537 79 573 79 573 127 531.8 127 536.9 100.5Z" fill="#00f4ff"/><path d="M539.2 79 573 79 573 127 534 127 539.1 100.5Z" fill="#00ffd0"/><path d="M542.8 79 573 79 573 127 537.7 127 542.7 100.5Z" fill="#20ff40"/><path d="M543.6 79 573 79 573 127 538.4 127 543.5 100.5Z" fill="#28ff00"/><path d="M546.5 79 573 79 573 127 541.3 127 546.4 100.5Z" fill="#c8ff00"/><path d="M550.2 79 573 79 573 127 545 127 550.1 100.5Z" fill="#ffff00"/><path d="M553.9 79 573 79 573 127 548.7 127 553.8 100.5Z" fill="#ffe800"/><path d="M556.8 79 573 79 573 127 551.6 127 556.7 100.5Z" fill="#ffdc00"/><path d="M557.6 79 573 79 573 127 552.4 127 557.5 100.5Z" fill="#ffd400"/><path d="M561.2 79 573 79 573 127 556.1 127 561.1 100.5Z" fill="#ffc000"/><path d="M563.4 79 573 79 573 127 558.3 127 563.3 100.5Z" fill="#ffb800"/><path d="M564.9 79 573 79 573 127 559.7 127 564.8 100.5Z" fill="#ffa800"/><path d="M573 79 573 127 563.4 127 568.5 100.5 568.6 79Z" fill="#ff9c00"/><path d="M573 79 573 127 564.9 127 570 100.5 570.1 79Z" fill="#ff9400"/><path d="M573 79 573 127 567.1 127 572.2 100.5 572.3 79Z" fill="#ff8400"/><path d="M573 117.6 573 127 570.8 127 572.5 117.6Z" fill="#ff7800"/><path d="M573 121.4 573 127 571.5 127 572.5 121.4Z" fill="#ff7400"/><path d="M525 106.1 525.5 106.1 526.7 99.5 526.7 79M525 120.5 525.5 120.5 529.4 100.5 529.5 79M527.2 127 532.2 100.5 532.3 79M530 127 535.1 100.5 535.2 79M532.8 127 537.9 100.5 538 79M535.6 127 540.7 100.5 540.8 79M538.5 127 543.5 100.5 543.6 79M541.3 127 546.4 100.5 546.5 79M544.1 127 549.2 100.5 549.3 79M546.9 127 552 100.5 552.1 79M549.7 127 554.8 100.5 554.9 79M552.6 127 557.7 100.5 557.8 79M555.4 127 560.5 100.5 560.6 79M558.2 127 563.3 100.5 563.4 79M561 127 566.1 100.5 566.2 79M563.9 127 568.9 100.5 569 79M566.7 127 571.8 100.5 571.9 79M569.5 127 572.5 111.2 573 111.2M572.3 127 572.5 125.7 573 125.7" fill="none" stroke="#000" stroke-width="1" shape-rendering="crispEdges"/></g><g clip-path="url(#cb)"><rect x="525" y="127" width="48" height="13" fill="#ffe800"/><path d="M573 127 573 140 525 140 525 127.7 548.6 127.5 548.6 127Z" fill="#ffdc00"/><path d="M573 127 573 140 525 140 525 128.2 548.5 128.1 549.5 127.5 549.5 127Z" fill="#ffd400"/><path d="M573 127 573 140 525 140 525 130.7 554 130.5 554.2 127Z" fill="#ffc000"/><path d="M573 127 573 140 525 140 525 132.2 555.5 132.2 557.1 131.5 557.1 127Z" fill="#ffb800"/><path d="M573 127 573 140 525 140 525 133.2 557.5 133.2 559 132.5 559 127Z" fill="#ffa800"/><path d="M573 127 573 140 525 140 525 135.6 563.5 135.6 563.7 127Z" fill="#ff9c00"/><path d="M573 127 573 140 525 140 525 136.6 565.5 136.6 565.6 127Z" fill="#ff9400"/><path d="M573 127 573 140 525 140 525 138.1 567.5 138.1 568.5 137.5 568.5 127Z" fill="#ff8400"/><path d="M525 128.3 548.5 128.3 549.5 127.9 549.8 127M525 130.2 552.5 130.1 553.4 129.5 553.4 127M525 132.1 555.5 132.1 557 131.5 557 127M525 134 559.5 134 560.7 133.5 560.7 127M525 136 563.5 135.9 564.3 135.5 564.3 127M525 137.9 567.5 137.8 567.9 137.5 567.9 127M571.6 140 571.6 127" fill="none" stroke="#000" stroke-width="1" shape-rendering="crispEdges"/></g></g><g shape-rendering="crispEdges"><rect x="455" y="126" width="10" height="1" fill="#ff0000"/><rect x="460" y="125" width="5" height="1" fill="#ff0000"/><rect x="455" y="127" width="10" height="2" fill="#00d000"/><rect x="460" y="129" width="5" height="1" fill="#00ffff"/><rect x="426" y="129" width="1" height="351" fill="#000"/><path d="M525 127.5 L528 127.5 L551 140 L525 140Z" fill="#000"/><rect x="423" y="378" width="2" height="5" fill="#ff0000"/><rect x="424" y="383" width="1" height="5" fill="#ff0000"/><rect x="426" y="378" width="1" height="9" fill="#00ffff"/><rect x="427" y="378" width="1" height="4" fill="#00e000"/></g><g stroke="#1150e0" stroke-width="1" fill="none" shape-rendering="crispEdges"><path d="M525.5 79.5 H573.5 V140.5 M525.5 79.5 V480.5 M425.5 480.5 H704.5 V127.5 H573.5 M525.5 140.5 H691.5 V480.5 M525 127.5 H573.5"/></g><g stroke="#00a000" stroke-width="1" fill="none" shape-rendering="crispEdges"><path d="M425.5 480 V127.5 H525"/></g></svg>
</body></html>
